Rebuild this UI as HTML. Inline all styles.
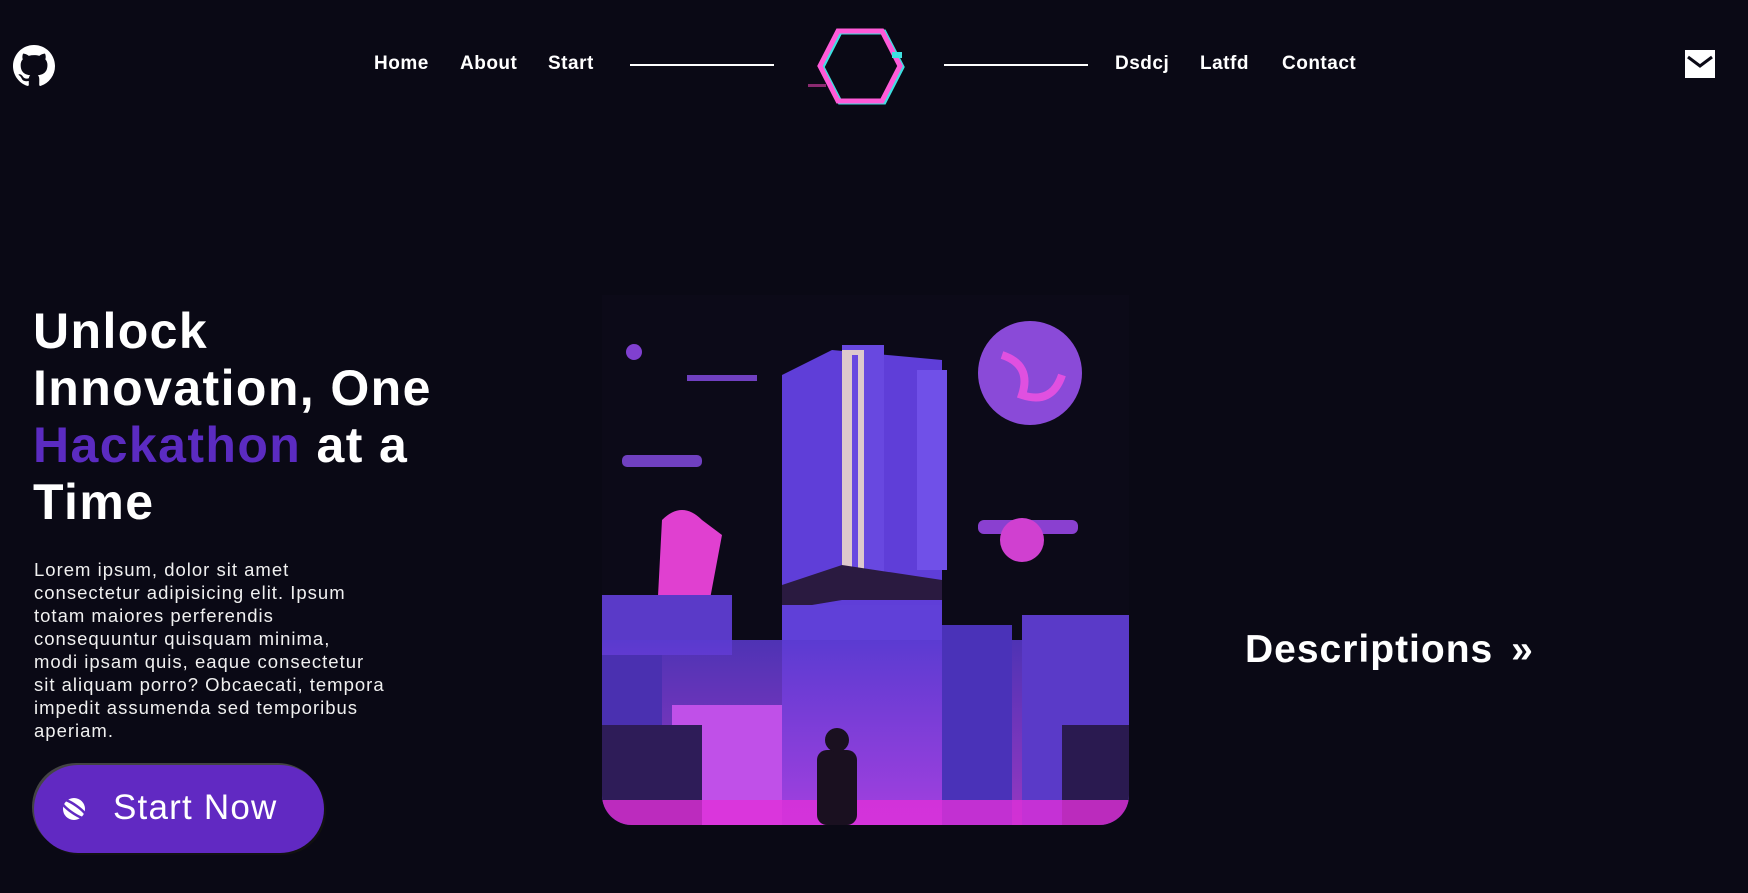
<!DOCTYPE html>
<html><head><meta charset="utf-8"><style>
*{margin:0;padding:0;box-sizing:border-box}
body{width:1748px;height:893px;background:#0a0915;color:#fff;font-family:"Liberation Sans",sans-serif;position:relative;overflow:hidden}
.nav a{position:absolute;top:53px;font-size:19px;font-weight:bold;color:#fff;text-decoration:none;letter-spacing:0.5px}
.line{position:absolute;top:64px;height:2px;background:#fff}
h1{position:absolute;left:33px;top:303px;font-size:50px;line-height:57px;font-weight:bold;letter-spacing:1.4px;white-space:nowrap}
h1 span{color:#5b2bc1}
p{position:absolute;left:34px;top:558px;font-size:18.5px;line-height:23px;color:#f0f0f0;letter-spacing:1px;white-space:nowrap}
.btn{position:absolute;left:34px;top:765px;width:290px;height:88px;border-radius:44px;background:#6129c2;box-shadow:-2px -2px 0 #444,2px 2px 0 #111}
.btn span{position:absolute;left:79px;top:23px;font-size:35px;letter-spacing:1.2px}
.desc{position:absolute;left:1245px;top:628px;font-size:39px;font-weight:bold;letter-spacing:1px}
</style></head><body>
<svg style="position:absolute;left:13px;top:45px" width="42" height="42" viewBox="0 0 16 16"><path fill="#fff" d="M8 0C3.58 0 0 3.58 0 8c0 3.540 2.29 6.53 5.470 7.59.4.07.55-.17.55-.38 0-.19-.01-.82-.01-1.49-2.010.37-2.530-.49-2.690-.94-.09-.23-.48-.94-.82-1.130-.28-.15-.68-.52-.01-.53.63-.01 1.080.58 1.230.82.72 1.210 1.870.87 2.330.66.07-.52.28-.87.51-1.070-1.780-.2-3.640-.89-3.640-3.950 0-.87.31-1.590.82-2.150-.08-.2-.36-1.020.08-2.120 0 0 .67-.21 2.200.82.64-.18 1.320-.27 2-.27.68 0 1.360.09 2 .27 1.530-1.040 2.200-.82 2.200-.82.44 1.100.16 1.920.08 2.120.51.56.82 1.270.82 2.150 0 3.070-1.870 3.750-3.650 3.950.29.25.54.73.54 1.480 0 1.070-.01 1.930-.01 2.200 0 .21.15.46.55.38A8.013 8.013 0 0016 8c0-4.420-3.580-8-8-8z"/></svg>
<div class="nav">
<a style="left:374px">Home</a><a style="left:460px">About</a><a style="left:548px">Start</a>
<a style="left:1115px">Dsdcj</a><a style="left:1200px">Latfd</a><a style="left:1282px">Contact</a>
</div>
<div class="line" style="left:630px;width:144px"></div>
<div class="line" style="left:944px;width:144px"></div>
<svg style="position:absolute;left:808px;top:26px" width="104" height="80" viewBox="0 0 104 80">
<polygon points="30,5 74,5 92,40 74,75 30,75 12,40" fill="none" stroke="#3fe0e0" stroke-width="5" transform="translate(2,1)"/>
<polygon points="30,5 74,5 92,40 74,75 30,75 12,40" fill="none" stroke="#ff5ad8" stroke-width="5"/>
<rect x="0" y="58" width="18" height="3" fill="#8a2a70"/><rect x="84" y="26" width="10" height="6" fill="#3fe0e0"/>
</svg>
<svg style="position:absolute;left:1685px;top:50px" width="30" height="28" viewBox="0 0 30 28"><rect width="30" height="28" fill="#fff"/><path d="M3 7 L15 16 L27 7" fill="none" stroke="#0a0915" stroke-width="3"/></svg>
<h1>Unlock<br>Innovation, One<br><span>Hackathon</span> at a<br>Time</h1>
<p>Lorem ipsum, dolor sit amet<br>consectetur adipisicing elit. Ipsum<br>totam maiores perferendis<br>consequuntur quisquam minima,<br>modi ipsam quis, eaque consectetur<br>sit aliquam porro? Obcaecati, tempora<br>impedit assumenda sed temporibus<br>aperiam.</p>
<div class="btn"><svg style="position:absolute;left:26px;top:30px" width="28" height="28" viewBox="0 0 28 28"><circle cx="14" cy="14" r="11" fill="#fff"/><ellipse cx="14" cy="14" rx="16" ry="4" fill="none" stroke="#6129c2" stroke-width="2.5" transform="rotate(35 14 14)"/></svg><span>Start Now</span></div>
<svg style="position:absolute;left:602px;top:295px" width="527" height="530" viewBox="0 0 527 530">
<defs><clipPath id="c"><path d="M0 0H527V500A30 30 0 0 1 497 530H30A30 30 0 0 1 0 500Z"/></clipPath>
<linearGradient id="g" x1="0" y1="0" x2="0" y2="1"><stop offset="0" stop-color="#5a3ad0"/><stop offset="1" stop-color="#b040e0"/></linearGradient></defs>
<g clip-path="url(#c)">
<rect width="527" height="530" fill="#0c0a18"/>
<circle cx="428" cy="78" r="52" fill="#8a4ad8"/><path d="M400 60 q30 10 20 40 q30 10 40 -20" fill="none" stroke="#e050e0" stroke-width="8"/>
<circle cx="32" cy="57" r="8" fill="#8040d0"/>
<rect x="85" y="80" width="70" height="6" fill="#7040c0"/><rect x="20" y="160" width="80" height="12" rx="5" fill="#7040c0"/><rect x="376" y="225" width="100" height="14" rx="6" fill="#8a40d0"/>
<path d="M60 225 q20 -20 40 0 l20 15 l-15 80 h-50 z" fill="#e040d0"/>
<rect x="0" y="300" width="130" height="60" fill="#5a3ac8"/>
<path d="M180 80 l50 -25 l110 10 v400 h-160 z" fill="#5f3ed8"/>
<rect x="240" y="50" width="42" height="240" fill="#6848e0"/>
<rect x="240" y="55" width="22" height="230" fill="#f2e0c8" opacity="0.85"/>
<rect x="250" y="60" width="6" height="220" fill="#6848e0"/>
<rect x="315" y="75" width="30" height="200" fill="#7050e8"/>
<path d="M180 290 l60 -20 l100 15 v20 l-100 0 l-60 10z" fill="#2a1a40"/>
<rect x="180" y="310" width="160" height="220" fill="#6040d8"/>
<rect x="0" y="345" width="527" height="185" fill="url(#g)" opacity="0.85"/>
<rect x="0" y="360" width="60" height="170" fill="#4a30b0"/>
<rect x="70" y="410" width="110" height="120" fill="#c050e8"/>
<rect x="340" y="330" width="70" height="200" fill="#4a32b8"/>
<rect x="420" y="320" width="107" height="210" fill="#5a3ac8"/>
<rect x="460" y="430" width="67" height="100" fill="#2a1a50"/>
<rect x="0" y="430" width="100" height="100" fill="#2e1c58"/>
<circle cx="420" cy="245" r="22" fill="#d040d0"/>
<rect x="0" y="505" width="527" height="25" fill="#e030d8" opacity="0.8"/>
<rect x="215" y="455" width="40" height="75" rx="10" fill="#1a1020"/><circle cx="235" cy="445" r="12" fill="#1a1020"/>
</g></svg>
<div class="desc">Descriptions <span style="margin-left:6px">»</span></div>
</body></html>
